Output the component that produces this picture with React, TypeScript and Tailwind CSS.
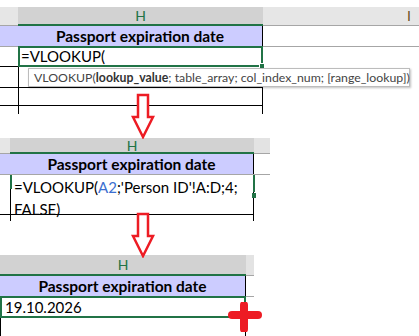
import React from 'react'

const GREEN = 'border-[#217346]'

function Arrow({ className }: { className: string }) {
    return (
        <svg className={className} width="24" height="46" viewBox="0 0 24 46">
            <path
                d="M7 2 H17 V24 H22 L12 44 L2 24 H7 Z"
                fill="white"
                stroke="#ed1c24"
                strokeWidth="2.5"
                strokeLinejoin="miter"
            />
        </svg>
    )
}

function FillPlus({ className }: { className: string }) {
    return (
        <svg className={className} width="34" height="30" viewBox="0 0 34 30">
            <line x1="4" y1="13" x2="30" y2="13" stroke="#ed1c24" strokeWidth="8" strokeLinecap="round" />
            <line x1="16" y1="3" x2="16" y2="27" stroke="#ed1c24" strokeWidth="8" strokeLinecap="round" />
        </svg>
    )
}

export default function App() {
    return (
        <div className="relative w-[419px] h-[336px] bg-white overflow-hidden font-['Lato',sans-serif] text-black">
            {/* step 1: typing the formula */}
            <div className="pt-[7px]">
                <div className="flex h-[19px]">
                    <div className="w-[18px] bg-[#e6e6e6] border-b border-[#a6a6a6]" />
                    <div className={`w-[245px] bg-[#d2d2d2] border-b-2 ${GREEN} text-center text-[14px] leading-[17px] text-[#217346]`}>H</div>
                    <div className="flex-1 bg-[#e6e6e6] border-b border-[#a6a6a6] pl-[144px] text-[14px] leading-[17px] text-[#6b5020]">I</div>
                </div>
                <div className="flex h-[21px] border-b border-[#a6a6a6]">
                    <div className="w-[18px] bg-[#ccccff]" />
                    <div className="w-[245px] bg-[#ccccff] border-r border-black text-center font-bold text-[15.5px] leading-[20px]">
                        Passport expiration date
                    </div>
                    <div className="flex-1" />
                </div>
                <div className="flex h-[20px]">
                    <div className="w-[18px] border-b border-black" />
                    <div className={`relative w-[245px] border-2 -mt-[1px] h-[21px] ${GREEN} pl-[1px] text-[15px] leading-[17px]`}>
                        =VLOOKUP(
                        <div className="absolute -right-[4px] -bottom-[4px] w-[6px] h-[6px] bg-[#217346] border border-white" />
                    </div>
                </div>
                <div className="flex h-[21px]">
                    <div className="w-[18px] border-b border-black" />
                    <div className="w-[245px] border-x border-b border-black" />
                </div>
                <div className="flex h-[18px]">
                    <div className="w-[18px] border-b border-black" />
                    <div className="w-[245px] border-x border-b border-black" />
                </div>
                <div className="flex h-[8px]">
                    <div className="w-[18px]" />
                    <div className="w-[245px] border-x border-black" />
                </div>
            </div>

            {/* step 2: the finished formula */}
            <div className="mt-[24px]">
                <div className="flex h-[16px]">
                    <div className="w-[10px] bg-[#e6e6e6] border-b border-[#a6a6a6]" />
                    <div className={`w-[244px] bg-[#d2d2d2] border-b-2 ${GREEN} text-center text-[14px] leading-[15px] text-[#217346]`}>H</div>
                    <div className="w-[16px] bg-[#e3e3e3] border-b border-[#a6a6a6]" />
                </div>
                <div className="flex h-[21px] w-[270px] border-b border-[#a6a6a6]">
                    <div className="w-[10px] bg-[#ccccff]" />
                    <div className="w-[244px] bg-[#ccccff] border-r border-black text-center font-bold text-[15.5px] leading-[20px]">
                        Passport expiration date
                    </div>
                </div>
                <div className="flex h-[40px]">
                    <div className="w-[10px] border-b border-black" />
                    <div className="relative w-[244px] border-b border-r border-l border-black pl-[3px] pt-[1px] text-[15px] leading-[22px]">
                        <div>
                            =VLOOKUP(<span className="text-[#3c6fd0]">A2</span>;'Person ID'!A:D;4;
                        </div>
                        <div>FALSE)</div>
                        <div className="absolute -left-[1px] top-0 w-[2px] h-[14px] bg-[#217346]" />
                        <div className="absolute -right-[2px] top-0 w-[2px] h-[17px] bg-[#217346]" />
                        <div className="absolute -right-[3px] top-[18px] w-[4px] h-[5px] bg-[#217346]" />
                    </div>
                </div>
                <div className="flex h-[6px]">
                    <div className="w-[10px]" />
                    <div className="w-[244px] border-x border-black" />
                </div>
            </div>

            {/* step 3: the result */}
            <div className="mt-[34px]">
                <div className="flex h-[21px]">
                    <div className={`w-[246px] bg-[#d2d2d2] border-b-2 ${GREEN} text-center text-[14px] leading-[19px] text-[#217346]`}>H</div>
                    <div className="w-[8px] bg-[#e3e3e3] border-b border-[#a6a6a6]" />
                </div>
                <div className="flex h-[21px] w-[254px] border-b border-[#a6a6a6]">
                    <div className="w-[246px] bg-[#ccccff] border-r border-black text-center font-bold text-[15.5px] leading-[20px]">
                        Passport expiration date
                    </div>
                </div>
                <div className={`w-[246px] h-[22px] -mt-[1px] border-2 ${GREEN} pl-[3px] text-[15px] leading-[19px]`}>
                    19.10.2026
                </div>
                <div className="w-[246px] h-[20px] border-x border-b border-black" />
            </div>

            <Arrow className="absolute left-[131px] top-[93px]" />
            <Arrow className="absolute left-[131px] top-[212px]" />
            <FillPlus className="absolute left-[228px] top-[302px]" />

            {/* function tooltip */}
            <div className="absolute left-[28px] top-[68px] w-[382px] h-[19px] bg-white border border-[#bcbcbc] shadow-[1px_1px_2px_rgba(0,0,0,0.25)] pl-[5px] text-[12.3px] leading-[17px] text-[#444] whitespace-nowrap">
                VLOOKUP(<span className="font-bold text-[#333]">lookup_value</span>; table_array; col_index_num; [range_lookup])
            </div>
        </div>
    )
}
